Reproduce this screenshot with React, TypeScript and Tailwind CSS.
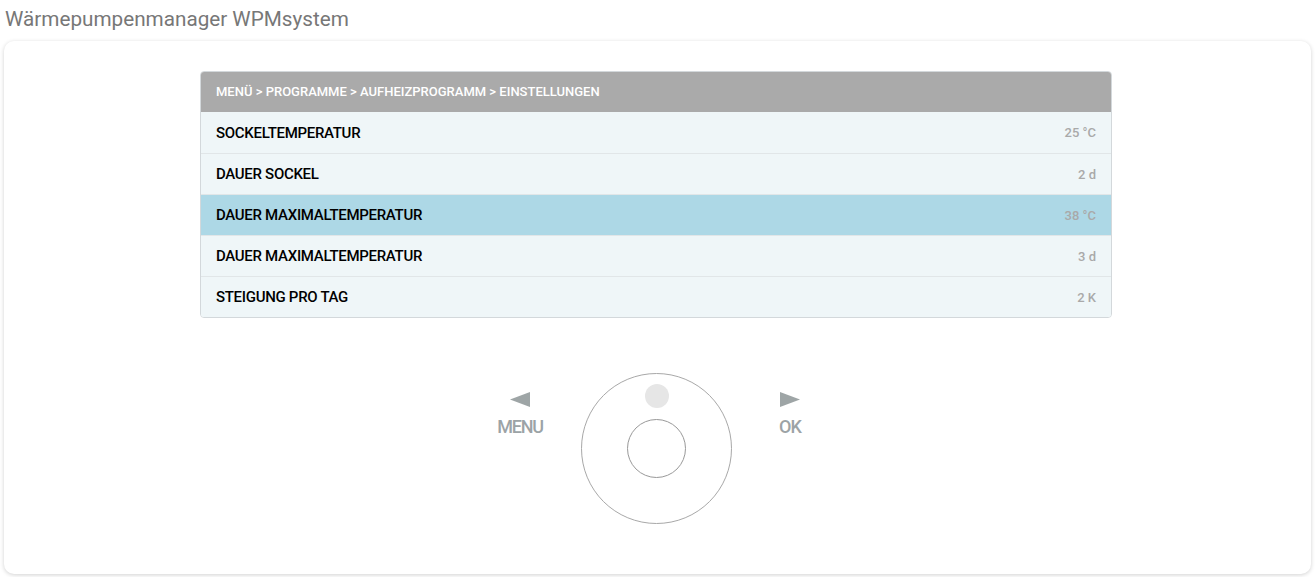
import React from "react";

const rows = [
  { label: "SOCKELTEMPERATUR", value: "25 °C" },
  { label: "DAUER SOCKEL", value: "2 d" },
  { label: "DAUER MAXIMALTEMPERATUR", value: "38 °C", active: true },
  { label: "DAUER MAXIMALTEMPERATUR", value: "3 d" },
  { label: "STEIGUNG PRO TAG", value: "2 K" },
];

const App = () => {
  return (
    <div className="min-h-[577px] bg-white font-['Roboto','Liberation_Sans',sans-serif]">
      {/* TITLE */}
      <h1 className="pl-[5px] pt-[5px] h-[41px] text-[20.7px] leading-[28px] text-[#777777]">
        Wärmepumpenmanager WPMsystem
      </h1>

      {/* CARD */}
      <div className="ml-[4px] mr-[5px] h-[533px] rounded-[10px] bg-white shadow-[0_1px_4px_rgba(0,0,0,0.18)] pt-[30px]">
        {/* MENU TABLE */}
        <div className="ml-[196px] w-[912px] rounded-[4px] border border-[#d3d8db] overflow-hidden">
          <div className="h-[40px] bg-[#aaaaaa] flex items-center px-[15px] text-[13px] font-medium text-white">
            MENÜ &gt; PROGRAMME &gt; AUFHEIZPROGRAMM &gt; EINSTELLUNGEN
          </div>
          {rows.map((r, i) => (
            <div
              key={i}
              className={`h-[41px] flex items-center justify-between px-[15px] pt-[1px] ${
                i > 0 ? "border-t border-[#e1e6e8]" : ""
              } ${r.active ? "bg-[#add8e6]" : "bg-[#eff6f8]"}`}
            >
              <span className="text-[15px] font-medium text-black tracking-[-0.3px]">
                {r.label}
              </span>
              <span className="text-[13px] font-medium text-[#a9a9a9]">
                {r.value}
              </span>
            </div>
          ))}
        </div>

        {/* CONTROLLER */}
        <div className="mt-[55px] flex items-start pl-[493px]">
          <div className="mt-[19px] w-[46px] flex flex-col items-center text-[#9ca3a6]">
            <svg width="20" height="15" viewBox="0 0 20 15">
              <polygon points="0,7.5 20,0 20,15" fill="#9ea5a6" />
            </svg>
            <span className="mt-[10px] text-[18px] font-medium leading-[20px] tracking-[-1.2px]">MENU</span>
          </div>

          <div className="ml-[38px] w-[151px] h-[151px] rounded-full border border-[#a8a8a8] flex flex-col items-center pt-[10px]">
            <div className="w-[24px] h-[24px] rounded-full bg-[#e6e6e6]" />
            <div className="mt-[11px] w-[59px] h-[59px] rounded-full border border-[#999999]" />
          </div>

          <div className="mt-[19px] ml-[47px] w-[22px] flex flex-col items-center text-[#9ca3a6]">
            <svg width="20" height="15" viewBox="0 0 20 15">
              <polygon points="20,7.5 0,0 0,15" fill="#9ea5a6" />
            </svg>
            <span className="mt-[10px] text-[18px] font-medium leading-[20px] tracking-[-1px]">OK</span>
          </div>
        </div>
      </div>
    </div>
  );
};

export default App;
